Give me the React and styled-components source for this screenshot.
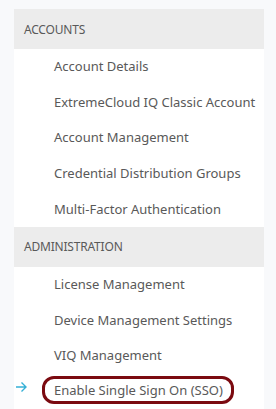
import React from 'react';
import styled, { createGlobalStyle } from 'styled-components';

const Global = createGlobalStyle`
  html, body {
    margin: 0;
    padding: 0;
    background: #f8f9fb;
  }
  body {
    font-family: "Noto Sans", "Open Sans", "Liberation Sans", sans-serif;
  }
`;

const Page = styled.div`
  width: 276px;
  height: 409px;
  padding: 9px 0 0 14px;
  box-sizing: border-box;
  overflow: hidden;
`;

const Panel = styled.div`
  width: 250px;
  background: #ffffff;
  display: flex;
  flex-direction: column;
  min-height: 420px;
`;

const SectionHeader = styled.div`
  height: 40px;
  display: flex;
  align-items: center;
  padding-left: 10px;
  background: #ececec;
  color: #595959;
  font-size: 12px;
  text-transform: uppercase;
  letter-spacing: -0.2px;
`;

const Item = styled.div`
  position: relative;
  height: 35.6px;
  display: flex;
  align-items: center;
  padding-left: 40px;
  padding-bottom: 1px;
  box-sizing: border-box;
  color: #595959;
  font-size: 13px;
  white-space: nowrap;
`;

const Label = styled.span`
  display: inline-flex;
  align-items: center;
  ${p => p.$active && `
    margin-left: -12.3px;
    padding: 0 8px 0 9.3px;
    height: 22px;
    border: 3px solid #7b0a10;
    border-radius: 12px;
    margin-top: -2px;
  `}
`;

const Arrow = styled.svg`
  position: absolute;
  left: 1px;
  top: 7px;
  width: 13px;
  height: 12px;
`;

const sections = [
  {
    title: 'Accounts',
    items: [
      'Account Details',
      'ExtremeCloud IQ Classic Account',
      'Account Management',
      'Credential Distribution Groups',
      'Multi-Factor Authentication',
    ],
  },
  {
    title: 'Administration',
    items: [
      'License Management',
      'Device Management Settings',
      'VIQ Management',
      'Enable Single Sign On (SSO)',
    ],
  },
];

const active = 'Enable Single Sign On (SSO)';

export default function App() {
  return (
    <>
      <Global />
      <Page>
        <Panel>
          {sections.map(s => (
            <React.Fragment key={s.title}>
              <SectionHeader>{s.title}</SectionHeader>
              {s.items.map(it => (
                <Item key={it}>
                  {it === active && (
                    <Arrow viewBox="0 0 13 12">
                      <path d="M1 6 H11 M6.5 1.5 L11 6 L6.5 10.5" fill="none" stroke="#35b0d6" strokeWidth="1.4" />
                    </Arrow>
                  )}
                  <Label $active={it === active}>{it}</Label>
                </Item>
              ))}
            </React.Fragment>
          ))}
        </Panel>
      </Page>
    </>
  );
}
